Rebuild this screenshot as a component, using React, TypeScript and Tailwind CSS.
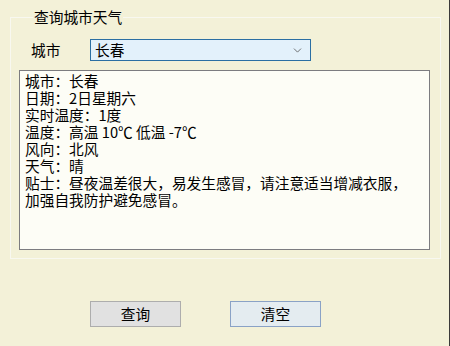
import { ChevronDown } from 'lucide-react';

const lines = [
    '城市：长春',
    '日期：2日星期六',
    '实时温度：1度',
    '温度：高温 10℃ 低温 -7℃',
    '风向：北风',
    '天气：晴',
    '贴士：昼夜温差很大，易发生感冒，请注意适当增减衣服，加强自我防护避免感冒。',
];

export default function App() {
    return (
        <div
            className="w-[450px] h-[346px] bg-[#f3f1d8] border-r border-[#3a3a3a] text-black text-[14.7px] overflow-hidden"
            style={{ fontFamily: '"Noto Sans CJK SC", "Noto Sans", sans-serif' }}
        >
            {/* Group box */}
            <fieldset className="ml-[10px] mt-[7px] w-[431px] h-[252px] border border-[#f8f8f0] px-[8px]">
                <legend className="ml-[14px] px-px leading-[20px]">查询城市天气</legend>

                <div className="flex items-center mt-[12px] h-[22px]">
                    <span className="w-[71px] pl-[12px] leading-[22px]">城市</span>
                    <div className="flex items-center justify-between w-[221px] h-[22px] border border-[#2b6fa3] bg-[#e3f1fb] pl-[4px] pr-[6px]">
                        <span className="leading-[20px]">长春</span>
                        <ChevronDown size={13} strokeWidth={1.5} className="text-[#555]" />
                    </div>
                </div>

                <div className="mt-[9px] w-[411px] h-[180px] border border-[#7c7c80] bg-[#fdfdf6] pl-[5px] pr-[14px] pt-[1px] leading-[17px]">
                    {lines.map(l => (
                        <div key={l} className="whitespace-pre-wrap">{l}</div>
                    ))}
                </div>
            </fieldset>

            {/* Buttons */}
            <div className="flex gap-[49px] ml-[90px] mt-[42px]">
                <button className="w-[91px] h-[26px] border border-[#adadad] bg-[#e1e1e1] leading-[24px]">查询</button>
                <button className="w-[91px] h-[26px] border border-[#8aa2c6] bg-[#e4ecf0] leading-[24px]">清空</button>
            </div>
        </div>
    );
}
